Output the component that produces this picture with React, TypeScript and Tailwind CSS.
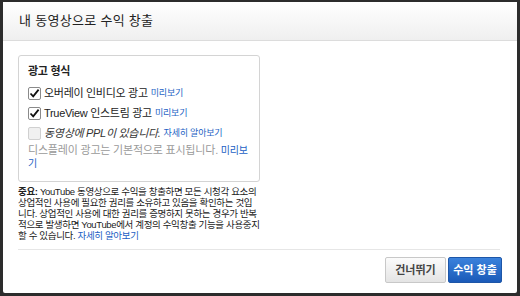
import React from "react";

const font = { fontFamily: '"Liberation Sans", "Noto Sans CJK KR", sans-serif' };

function Check({ checked, disabled }: { checked?: boolean; disabled?: boolean }) {
  return (
    <span
      className={`flex h-[13px] w-[13px] shrink-0 items-center justify-center rounded-[2px] border ${
        disabled ? "border-[#d0d0d0] bg-[#f0f0f0]" : "border-[#8a8a8a] bg-white"
      }`}
    >
      {checked && (
        <svg width="11" height="11" viewBox="0 0 11 11">
          <path d="M1.5 5.5 L4.2 8.3 L9.6 1.6" fill="none" stroke="#111" strokeWidth="1.8" />
        </svg>
      )}
    </span>
  );
}

export default function App() {
  return (
    <div className="h-[296px] w-[520px] bg-[#2c2c2c] pl-[3px] pt-[2px]" style={font}>
      <div className="flex h-[291px] w-[514px] flex-col rounded-[2px] bg-white">
        <div className="flex h-[39px] items-center border-b border-[#dcdcdc] bg-gradient-to-b from-white to-[#efefef] pl-[16px] text-[13px] tracking-[0.3px] text-[#222]">
          내 동영상으로 수익 창출
        </div>
        <div className="px-[15px] pt-[14px]">
          <div className="flex h-[127px] w-[242px] flex-col rounded-[3px] border border-[#d4d4d4] px-[9px] pt-[7px] text-[11px] tracking-[-0.3px] text-[#222]">
            <div className="h-[16px] font-bold leading-[16px]">광고 형식</div>
            <div className="mt-[6px] flex h-[16px] items-center gap-[3px] whitespace-nowrap leading-[16px]">
              <Check checked />
              <span>오버레이 인비디오 광고</span>
              <span className="text-[9px] tracking-[-0.2px] text-[#1c5fc4]">미리보기</span>
            </div>
            <div className="mt-[4px] flex h-[16px] items-center gap-[3px] whitespace-nowrap leading-[16px]">
              <Check checked />
              <span>TrueView 인스트림 광고</span>
              <span className="text-[9px] tracking-[-0.2px] text-[#1c5fc4]">미리보기</span>
            </div>
            <div className="mt-[4px] flex h-[16px] items-center gap-[3px] whitespace-nowrap leading-[16px]">
              <Check disabled />
              <span className="italic text-[#333]">동영상에 PPL이 있습니다.</span>
              <span className="text-[9px] tracking-[-0.2px] text-[#1c5fc4]">자세히 알아보기</span>
            </div>
            <div className="mt-[3px] whitespace-nowrap text-[11px] leading-[13px] tracking-[-0.2px] text-[#9a9a9a]">
              디스플레이 광고는 기본적으로 표시됩니다.{" "}
              <span className="text-[10px] text-[#1c5fc4]">
                미리보
                <br />기
              </span>
            </div>
          </div>
          <div className="mt-[4px] text-[9.5px] leading-[11px] tracking-[-0.35px] text-[#222] [&>div]:whitespace-nowrap">
            <div>
              <b>중요:</b> YouTube 동영상으로 수익을 창출하면 모든 시청각 요소의
            </div>
            <div>상업적인 사용에 필요한 권리를 소유하고 있음을 확인하는 것입</div>
            <div>니다. 상업적인 사용에 대한 권리를 증명하지 못하는 경우가 반복</div>
            <div>적으로 발생하면 YouTube에서 계정의 수익창출 기능을 사용중지</div>
            <div>
              할 수 있습니다. <span className="text-[#1c5fc4]">자세히 알아보기</span>
            </div>
          </div>
          <div className="mt-[8px] w-[482px] border-t border-[#e6e6e6]" />
          <div className="mt-[7px] flex w-[484px] justify-end gap-[2px]">
            <button className="flex h-[26px] w-[61px] items-center justify-center rounded-[2px] border border-[#c8c8c8] bg-gradient-to-b from-[#fbfbfb] to-[#e4e4e4] text-[11px] font-bold text-[#444]">
              건너뛰기
            </button>
            <button className="flex h-[26px] w-[54px] items-center justify-center rounded-[2px] border border-[#1d56a8] bg-gradient-to-b from-[#3b82dc] to-[#1a5ab8] text-[11px] font-bold text-white">
              수익 창출
            </button>
          </div>
        </div>
      </div>
    </div>
  );
}
